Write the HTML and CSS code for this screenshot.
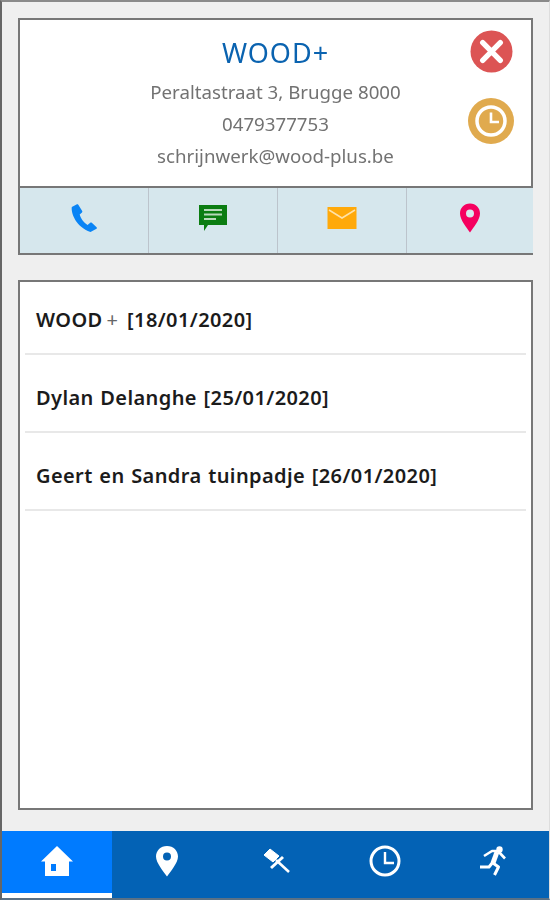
FILE: index.html
```html
<!DOCTYPE html>
<html lang="nl">
<head>
<meta charset="utf-8">
<title>WOOD+</title>
<link rel="stylesheet" href="styles.css">
</head>
<body>
<div class="app">
  <main class="content">
    <section class="card contact">
      <div class="info">
        <h1 class="name">WOOD+</h1>
        <p class="line">Peraltastraat 3, Brugge 8000</p>
        <p class="line">0479377753</p>
        <p class="line">schrijnwerk@wood-plus.be</p>
        <div class="round-actions">
          <svg class="round close" viewBox="0 0 44 44"><circle cx="22" cy="22" r="21.5" fill="#dc5454"/><path d="M13 13L31 31M31 13L13 31" stroke="#fff" stroke-width="5.5" stroke-linecap="round"/></svg>
          <svg class="round clock" viewBox="0 0 46 46"><circle cx="23" cy="23" r="23" fill="#e0aa4e"/><circle cx="23" cy="23" r="14" fill="none" stroke="#fff" stroke-width="3.5"/><path d="M23 14.5V24H31" fill="none" stroke="#fff" stroke-width="2.6"/></svg>
        </div>
      </div>
      <div class="actions">
        <div class="action"><svg class="icon" width="30" height="30" viewBox="0 0 30 30"><path d="M7.500 1.500L2.800 4C1.800 10 7 24 21.500 29L27.500 25.800C28 25.400 28 24.800 27.600 24.300L22.800 19.800C22.300 19.400 21.700 19.400 21.200 19.800L18.600 22C15 20 11.700 15.500 10.700 11.600L13 9.600C13.400 9.200 13.500 8.600 13.200 8.100L9.300 1.800C8.800 1.200 8.100 1.200 7.500 1.500Z" fill="#0a84f5"/></svg></div>
        <div class="action"><svg class="icon" width="30" height="30" viewBox="0 0 30 30"><path d="M1 2H29V22H10L6 28V22H1Z" fill="#0b7d12"/><path d="M6 7H24M6 11.500H24M6 16H18" stroke="#b7d8b9" stroke-width="1.800"/></svg></div>
        <div class="action"><svg class="icon" width="30" height="24" viewBox="0 0 30 24"><rect x="0.500" y="1" width="29" height="22" fill="#ffa90a"/><path d="M2 4L15 12L28 4" fill="none" stroke="#ffe2a8" stroke-width="1.500"/></svg></div>
        <div class="action"><svg class="icon" width="22" height="30" viewBox="0 0 22 30"><path fill-rule="evenodd" d="M11 0.500C5 0.500 1 5 1 10.500C1 17 8 25 11 29.500C14 25 21 17 21 10.500C21 5 17 0.500 11 0.500ZM11 6.500A4 4 0 1 1 11 14.500A4 4 0 1 1 11 6.500Z" fill="#f5005f"/></svg></div>
      </div>
    </section>
    <section class="card list">
      <div class="row">WOOD<span class="plus">+</span> [18/01/2020]</div>
      <div class="row">Dylan Delanghe [25/01/2020]</div>
      <div class="row">Geert en Sandra tuinpadje [26/01/2020]</div>
    </section>
  </main>
  <nav class="nav">
    <div class="tab active"><svg width="34" height="32" viewBox="0 0 34 32"><path fill-rule="evenodd" d="M17 1L33 16.500H29V31H5V16.500H1ZM11 19V26H16V19Z" fill="#fff"/></svg></div>
    <div class="tab"><svg width="24" height="32" viewBox="0 0 24 32"><path fill-rule="evenodd" d="M12 1C5.500 1 1 5.700 1 11.500C1 18 8.500 26.500 12 31.500C15.500 26.500 23 18 23 11.500C23 5.700 18.500 1 12 1ZM12 7.500A4 4 0 1 1 12 15.500A4 4 0 1 1 12 7.500Z" fill="#fff"/></svg></div>
    <div class="tab"><svg width="28" height="28" viewBox="0 0 28 28"><path d="M8 2L2 8L11 15L17 9Z" fill="#fff" stroke="#fff" stroke-linejoin="round"/><path d="M21 10L9 21" stroke="#fff" stroke-width="3"/><path d="M14 13L27 25" stroke="#fff" stroke-width="2.600"/></svg></div>
    <div class="tab"><svg width="32" height="32" viewBox="0 0 32 32"><circle cx="16" cy="16" r="14" fill="none" stroke="#fff" stroke-width="3"/><path d="M16 7V18H25" fill="none" stroke="#fff" stroke-width="2.400"/></svg></div>
    <div class="tab"><svg width="30" height="32" viewBox="0 0 30 32"><circle cx="20.500" cy="4.500" r="3.200" fill="#fff"/><path d="M5 11L13 6H19L26 13.500" fill="none" stroke="#fff" stroke-width="2.600" stroke-linejoin="round"/><path d="M18 7L14 18" stroke="#fff" stroke-width="5"/><path d="M14 18L19.500 22L15.500 30M14 17L10 22H1" fill="none" stroke="#fff" stroke-width="3" stroke-linejoin="round"/></svg></div>
  </nav>
</div>
</body>
</html>
```
FILE: styles.css
```css
* { box-sizing: border-box; }
html, body { margin: 0; padding: 0; }
body {
  width: 550px;
  height: 900px;
  overflow: hidden;
  font-family: "Noto Sans", "Open Sans", sans-serif;
  background: #efefef;
}
.app {
  height: 900px;
  border-top: 2px solid #8a8a8a;
  border-left: 2px solid #666;
  border-right: 1px solid #ddd;
  border-bottom: 2px solid #5b7185;
  display: flex;
  flex-direction: column;
  filter: blur(0.4px);
}
.content {
  flex: 1;
  padding: 16px 16px 21px 16px;
  display: flex;
  flex-direction: column;
  gap: 25px;
}
.card {
  background: #fff;
  border: 2px solid #777;
}
.contact { height: 237px; display: flex; flex-direction: column; }
.info {
  position: relative;
  height: 168px;
  padding-top: 16px;
  text-align: center;
  border-bottom: 2px solid #777;
}
.name {
  margin: 0 0 7px;
  font-size: 27px;
  line-height: 33px;
  letter-spacing: 1px;
  font-weight: 400;
  color: #0a63b0;
}
.line {
  margin: 0;
  font-size: 18.7px;
  line-height: 32px;
  color: #727272;
}
.round-actions {
  position: absolute;
  top: 10px;
  right: 17px;
  width: 46px;
  display: flex;
  flex-direction: column;
  align-items: center;
  gap: 25px;
}
.round { display: block; }
.close { width: 43px; height: 43px; }
.clock { width: 46px; height: 46px; }
.actions {
  flex: 1;
  display: flex;
  margin-right: -2px;
  background: #d6e7ed;
}
.action {
  flex: 0 0 129px;
  display: flex;
  align-items: center;
  justify-content: center;
  padding-bottom: 6px;
  border-right: 1px solid #bcc4cc;
}
.action:last-child { flex: 1; border-right: 0; }
.list {
  flex: 1;
  padding: 0 5px;
}
.row {
  height: 78px;
  padding: 8px 11px 0;
  display: flex;
  align-items: center;
  white-space: pre;
  border-bottom: 2px solid #e8e8e8;
  font-size: 20px;
  font-weight: 600;
  letter-spacing: 0.4px;
  word-spacing: 1px;
  color: #1b1b1b;
}
.row:first-child {
  height: 73px;
  padding-top: 3px;
}
.plus {
  font-weight: 400;
  color: #666;
  margin: 0 2px 0 4px;
}
.nav {
  height: 67px;
  display: flex;
  background: #0362b5;
}
.tab {
  flex: 1;
  display: flex;
  align-items: center;
  justify-content: center;
  padding-bottom: 8px;
}
.active {
  flex: 0 0 110px;
  background: #007bff;
  border-bottom: 5px solid #fff;
  padding-bottom: 3px;
}
```
